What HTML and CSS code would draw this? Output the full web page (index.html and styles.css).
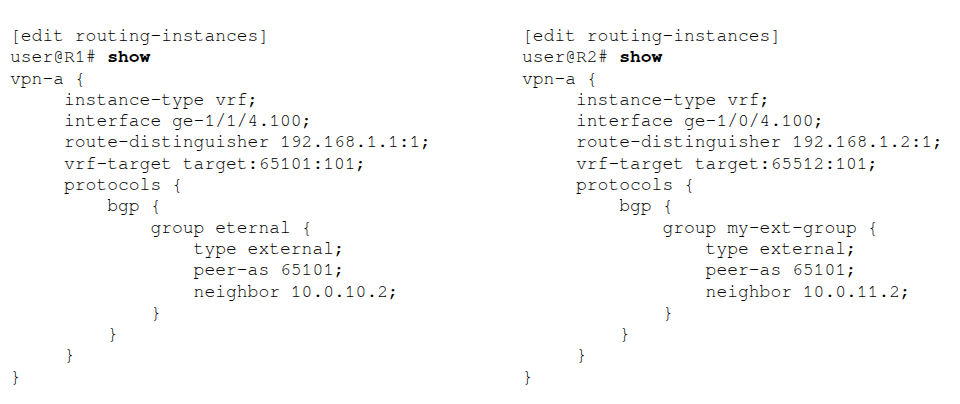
FILE: index.html
```html
<!DOCTYPE html>
<html>
<head>
<meta charset="utf-8">
<link rel="stylesheet" href="styles.css">
</head>
<body>
<div class="page">
<pre class="code">[edit routing-instances]
<span>user@R1#</span> <b>show</b>
vpn-a {
     instance-type vrf;
     interface ge-1/1/4.100;
     route-distinguisher 192.168.1.1:1;
     vrf-target target:65101:101;
     protocols {
         bgp {
             group eternal {
                 type external;
                 peer-as 65101;
                 neighbor 10.0.10.2;
             }
         }
     }
}</pre>
<pre class="code">[edit routing-instances]
<span>user@R2#</span> <b>show</b>
vpn-a {
     instance-type vrf;
     interface ge-1/0/4.100;
     route-distinguisher 192.168.1.2:1;
     vrf-target target:65512:101;
     protocols {
         bgp {
             group my-ext-group {
                 type external;
                 peer-as 65101;
                 neighbor 10.0.11.2;
             }
         }
     }
}</pre>
</div>
</body>
</html>
```
FILE: styles.css
```css
html, body {
  margin: 0;
  padding: 0;
  background: #ffffff;
}
.page {
  display: grid;
  grid-template-columns: 512px 1fr;
  padding: 26px 0 0 10px;
}
.code {
  margin: 0;
  font-family: "FreeMono", "Liberation Mono", "Courier New", monospace;
  font-size: 18px;
  line-height: 21.3px;
  color: #000000;
}
.code b {
  font-weight: bold;
}
```
